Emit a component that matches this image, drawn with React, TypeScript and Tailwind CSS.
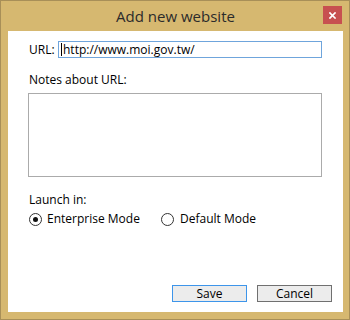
import React from "react";

const font = { fontFamily: '"Open Sans", "Noto Sans", sans-serif' };

function Radio({ checked }: { checked?: boolean }) {
  return (
    <span className="w-[13px] h-[13px] rounded-full border border-[#333333] bg-white flex items-center justify-center shrink-0">
      {checked && <span className="w-[5px] h-[5px] rounded-full bg-[#111111]" />}
    </span>
  );
}

export default function App() {
  return (
    <div
      className="w-[350px] h-[320px] border border-[#a88f58] bg-[#d6b870] flex flex-col pl-[7px] pr-[6px] pb-[7px] text-[12px] text-black"
      style={font}
    >
      {/* Title bar */}
      <div className="h-[30px] grid grid-cols-[1fr_auto_1fr] items-start">
        <div />
        <div className="text-[15px] leading-[20px] text-[#2b2b2b] pt-[5px]">Add new website</div>
        <div className="flex justify-end pt-[5px] pr-[1px]">
          <div className="w-[19px] h-[18px] bg-[#c75050] flex items-center justify-center">
            <svg width="7" height="7" viewBox="0 0 7 7">
              <path d="M1 1 L6 6 M6 1 L1 6" stroke="white" strokeWidth="1.7" strokeLinecap="square" />
            </svg>
          </div>
        </div>
      </div>

      {/* Client area */}
      <div className="flex-1 bg-white flex flex-col pl-[20px] pr-[11px] pt-[10px] pb-[10px]">
        <div className="flex items-center h-[17px]">
          <span className="ml-[1px] w-[29px] leading-[16px]">URL:</span>
          <div className="w-[264px] h-[17px] border border-[#6fa5dc] flex items-center pl-[2px]">
            <span className="w-[1px] h-[13px] bg-black mr-[1px]" />
            <span className="leading-[15px]">http://www.moi.gov.tw/</span>
          </div>
        </div>

        <div className="mt-[14px] ml-[1px] h-[16px] leading-[16px]">Notes about URL:</div>
        <div className="mt-[5px] w-[294px] h-[84px] border border-[#ababab]" />

        <div className="mt-[15px] ml-[1px] h-[16px] leading-[16px]">Launch in:</div>
        <div className="mt-[3px] ml-[1px] flex items-center h-[16px]">
          <div className="w-[132px] flex items-center gap-[5px]">
            <Radio checked />
            <span className="leading-[16px]">Enterprise Mode</span>
          </div>
          <div className="flex items-center gap-[6px]">
            <Radio />
            <span className="leading-[16px]">Default Mode</span>
          </div>
        </div>

        <div className="mt-auto flex justify-end gap-[10px]">
          <div className="w-[75px] h-[17px] border border-[#3d95ea] bg-[#ececec] flex items-center justify-center leading-[15px]">
            Save
          </div>
          <div className="w-[75px] h-[17px] border border-[#707070] bg-[#ececec] flex items-center justify-center leading-[15px]">
            Cancel
          </div>
        </div>
      </div>
    </div>
  );
}
